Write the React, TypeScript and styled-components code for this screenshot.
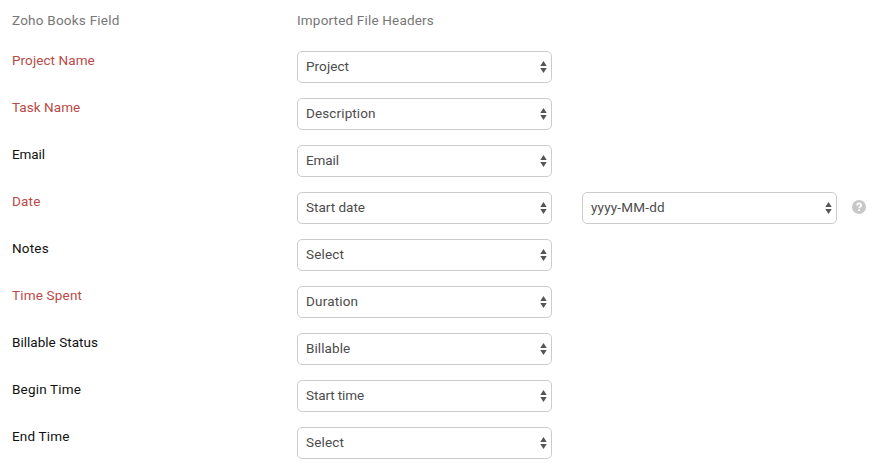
import React from "react";
import styled, { createGlobalStyle } from "styled-components";

const GlobalStyle = createGlobalStyle`
  * { box-sizing: border-box; }
  body {
    margin: 0;
    background: #fff;
    font: 13.5px/20px Roboto, "Liberation Sans", sans-serif;
  }
`;

const Form = styled.main`
  display: flex;
  flex-direction: column;
  gap: 15px;
  width: 878px;
  height: 470px;
  padding: 10px 12px 0;
  overflow: hidden;
`;

const Row = styled.div`
  display: grid;
  grid-template-columns: 255px 255px 284px;
  column-gap: 30px;
  height: 32px;
`;

const HeaderRow = styled(Row)`
  height: 26px;
  color: #777;
`;

const Text = styled.span<{ $spacing?: number }>`
  white-space: nowrap;
  letter-spacing: ${({ $spacing }) => $spacing ?? 0.18}px;
`;

const FieldLabel = styled.label<{ $required?: boolean }>`
  margin-top: -1px;
  color: ${({ $required }) => ($required ? "#b94a48" : "#111")};
`;

const FormatGroup = styled.div`
  display: flex;
  align-items: center;
  gap: 15px;
`;

const SelectBox = styled.button`
  display: flex;
  align-items: center;
  justify-content: space-between;
  flex: none;
  width: 255px;
  height: 32px;
  padding: 0 4px 2px 8px;
  border: 1px solid #ccc;
  border-radius: 5px;
  background: #fff;
  color: #4c4c4c;
  font: inherit;
  text-align: left;
`;

const Arrows = styled.svg`
  display: block;
  flex: none;
  margin-top: 2px;
`;

const Help = styled.svg`
  display: block;
  flex: none;
  margin-bottom: 2px;
`;

type Label = { text: string; spacing?: number };

function Select({ text, spacing }: Label) {
  return (
    <SelectBox type="button">
      <Text $spacing={spacing}>{text}</Text>
      <Arrows width="7" height="12" viewBox="0 0 7 12" fill="#555">
        <path d="M3.5 0 6.7 5H.3zM.3 7h6.4l-3.2 5z" />
      </Arrows>
    </SelectBox>
  );
}

type Field = { label: Label; value: Label; required?: boolean; format?: Label };

const fields: Field[] = [
  { label: { text: "Project Name", spacing: 0.08 }, value: { text: "Project", spacing: 0.08 }, required: true },
  { label: { text: "Task Name", spacing: 0.05 }, value: { text: "Description", spacing: 0.12 }, required: true },
  { label: { text: "Email", spacing: -0.08 }, value: { text: "Email", spacing: -0.08 } },
  { label: { text: "Date", spacing: 0.2 }, value: { text: "Start date", spacing: 0 }, required: true, format: { text: "yyyy-MM-dd", spacing: 0.2 } },
  { label: { text: "Notes" }, value: { text: "Select" } },
  { label: { text: "Time Spent" }, value: { text: "Duration" }, required: true },
  { label: { text: "Billable Status", spacing: 0.02 }, value: { text: "Billable", spacing: 0.08 } },
  { label: { text: "Begin Time", spacing: 0.18 }, value: { text: "Start time", spacing: -0.12 } },
  { label: { text: "End Time" }, value: { text: "Select" } },
];

export default function App() {
  return (
    <>
      <GlobalStyle />
      <Form>
        <HeaderRow>
          <Text $spacing={0.23}>Zoho Books Field</Text>
          <Text>Imported File Headers</Text>
        </HeaderRow>
        {fields.map(({ label, value, required, format }) => (
          <Row key={label.text}>
            <FieldLabel $required={required}>
              <Text $spacing={label.spacing}>{label.text}</Text>
            </FieldLabel>
            <Select {...value} />
            {format && (
              <FormatGroup>
                <Select {...format} />
                <Help width="14" height="14" viewBox="0 0 14 14" aria-label="Help">
                  <circle cx="7" cy="7" r="7" fill="#c8c8c8" />
                  <path d="M5 5.5C5.1 4 6 3.4 7.1 3.4c1.2 0 2.1.7 2.1 1.8 0 1.5-2.1 1.5-2.1 3.1" fill="none" stroke="#fff" strokeWidth="1.7" />
                  <path d="M6.2 9.2h1.8v1.7H6.2z" fill="#fff" />
                </Help>
              </FormatGroup>
            )}
          </Row>
        ))}
      </Form>
    </>
  );
}
